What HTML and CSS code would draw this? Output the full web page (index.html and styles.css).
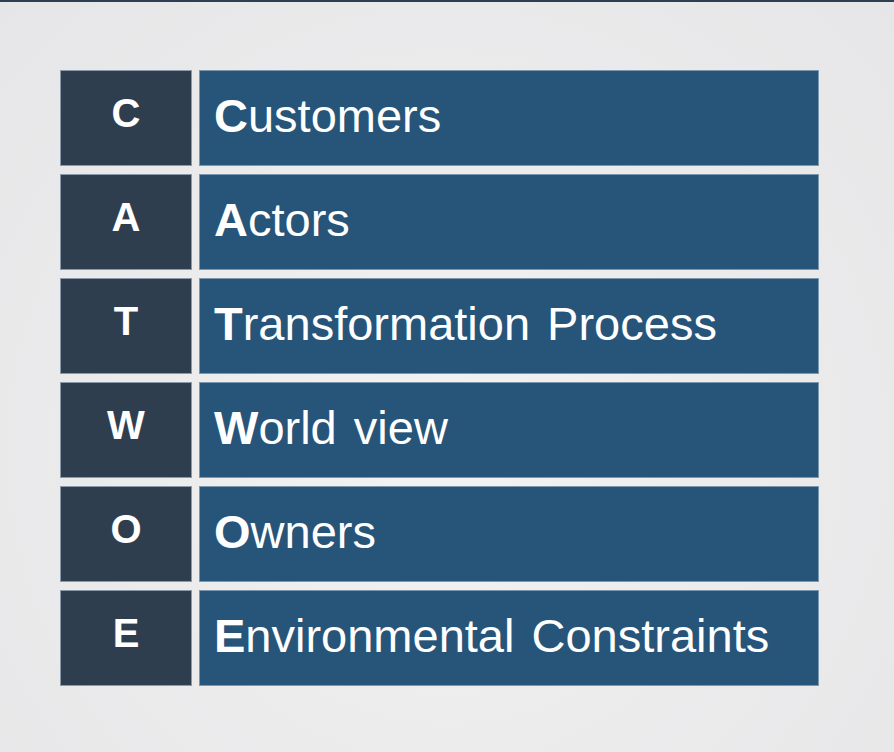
FILE: index.html
```html
<!DOCTYPE html>
<html lang="en">
<head>
<meta charset="utf-8">
<title>CATWOE</title>
<link rel="stylesheet" href="styles.css">
</head>
<body>
<div class="topbar"></div>
<main class="slide">
  <div class="catwoe">
    <div class="row">
      <div class="key">C</div>
      <div class="term"><b>C</b>ustomers</div>
    </div>
    <div class="row">
      <div class="key">A</div>
      <div class="term"><b>A</b>ctors</div>
    </div>
    <div class="row">
      <div class="key">T</div>
      <div class="term"><b>T</b>ransformation Process</div>
    </div>
    <div class="row">
      <div class="key">W</div>
      <div class="term"><b>W</b>orld view</div>
    </div>
    <div class="row">
      <div class="key">O</div>
      <div class="term"><b>O</b>wners</div>
    </div>
    <div class="row">
      <div class="key">E</div>
      <div class="term"><b>E</b>nvironmental Constraints</div>
    </div>
  </div>
</main>
</body>
</html>
```
FILE: styles.css
```css
html, body {
  margin: 0;
  height: 100%;
}
body {
  font-family: "Liberation Sans", Arial, sans-serif;
  background: radial-gradient(ellipse at 50% 60%, #f3f3f4 0%, #ececed 45%, #e6e6e8 100%);
  overflow: hidden;
}
.topbar {
  height: 2px;
  background: #2f3e50;
}
.slide {
  padding: 68px 0 0 60px;
}
.catwoe {
  display: flex;
  flex-direction: column;
  gap: 8px;
  width: 759px;
}
.row {
  display: grid;
  grid-template-columns: 132px 620px;
  column-gap: 7px;
  height: 96px;
}
.key, .term {
  display: flex;
  align-items: center;
  color: #ffffff;
  box-sizing: border-box;
  border: 1px solid #8a9aab;
}
.key {
  justify-content: center;
  background: #2f3e4f;
  font-weight: bold;
  font-size: 40px;
  padding-bottom: 10px;
}
.term {
  background: #27557a;
  border-color: #7d97b0;
  padding-left: 14px;
  padding-bottom: 6px;
  font-size: 47px;
  word-spacing: 4px;
}
.term b {
  font-weight: bold;
}
```
